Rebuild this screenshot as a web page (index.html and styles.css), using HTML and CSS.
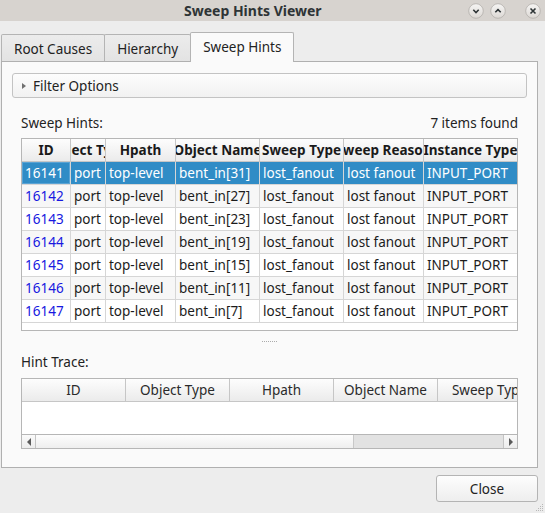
FILE: index.html
```html
<!DOCTYPE html>
<html>
<head>
<meta charset="utf-8">
<title>Sweep Hints Viewer</title>
<link rel="stylesheet" href="styles.css">
</head>
<body>
<div class="window">
  <header class="titlebar">
    <span class="title">Sweep Hints Viewer</span>
    <div class="wm">
      <svg class="wm-btn" viewBox="0 0 16 16"><defs><linearGradient id="g" x1="0" y1="0" x2="0" y2="1"><stop offset="0" stop-color="#f6f5f4"/><stop offset="1" stop-color="#dcd8d4"/></linearGradient></defs><circle cx="8" cy="8" r="7.3" fill="url(#g)" stroke="#b3afab" stroke-width="0.8"/><path d="M5.3 6.8 L8 9.5 L10.7 6.8" fill="none" stroke="#2e3436" stroke-width="1.6"/></svg>
      <svg class="wm-btn" viewBox="0 0 16 16"><circle cx="8" cy="8" r="7.3" fill="url(#g)" stroke="#b3afab" stroke-width="0.8"/><path d="M5.3 9.3 L8 6.6 L10.7 9.3" fill="none" stroke="#2e3436" stroke-width="1.6"/></svg>
      <svg class="wm-btn close" viewBox="0 0 16 16"><circle cx="8" cy="8" r="7.3" fill="url(#g)" stroke="#b3afab" stroke-width="0.8"/><path d="M5.5 5.5 L10.5 10.5 M10.5 5.5 L5.5 10.5" fill="none" stroke="#2e3436" stroke-width="1.6"/></svg>
    </div>
  </header>
  <main class="content">
    <nav class="tabs">
      <div class="tab">Root Causes</div>
      <div class="tab">Hierarchy</div>
      <div class="tab active">Sweep Hints</div>
    </nav>
    <section class="panel">
      <div class="filter"><span class="arrow"></span>Filter Options</div>
      <div class="group">
        <div class="caption"><span>Sweep Hints:</span><span>7 items found</span></div>
        <div class="table main">
          <div class="row head">
            <div><span>ID</span></div>
            <div><span>Object Type</span></div>
            <div><span>Hpath</span></div>
            <div><span>Object Name</span></div>
            <div><span>Sweep Type</span></div>
            <div><span>Sweep Reason</span></div>
            <div><span>Instance Type</span></div>
          </div>
          <div class="row sel">
            <div class="id focus">16141</div><div>port</div><div>top-level</div><div>bent_in[31]</div><div>lost_fanout</div><div>lost fanout</div><div>INPUT_PORT</div>
          </div>
          <div class="row alt">
            <div class="id">16142</div><div>port</div><div>top-level</div><div>bent_in[27]</div><div>lost_fanout</div><div>lost fanout</div><div>INPUT_PORT</div>
          </div>
          <div class="row">
            <div class="id">16143</div><div>port</div><div>top-level</div><div>bent_in[23]</div><div>lost_fanout</div><div>lost fanout</div><div>INPUT_PORT</div>
          </div>
          <div class="row alt">
            <div class="id">16144</div><div>port</div><div>top-level</div><div>bent_in[19]</div><div>lost_fanout</div><div>lost fanout</div><div>INPUT_PORT</div>
          </div>
          <div class="row">
            <div class="id">16145</div><div>port</div><div>top-level</div><div>bent_in[15]</div><div>lost_fanout</div><div>lost fanout</div><div>INPUT_PORT</div>
          </div>
          <div class="row alt">
            <div class="id">16146</div><div>port</div><div>top-level</div><div>bent_in[11]</div><div>lost_fanout</div><div>lost fanout</div><div>INPUT_PORT</div>
          </div>
          <div class="row">
            <div class="id">16147</div><div>port</div><div>top-level</div><div>bent_in[7]</div><div>lost_fanout</div><div>lost fanout</div><div>INPUT_PORT</div>
          </div>
        </div>
        <div class="splitter"><span class="dots"></span></div>
        <div class="caption trace-caption"><span>Hint Trace:</span></div>
        <div class="table trace">
          <div class="row head">
            <div><span>ID</span></div>
            <div><span>Object Type</span></div>
            <div><span>Hpath</span></div>
            <div><span>Object Name</span></div>
            <div><span>Sweep Type</span></div>
          </div>
          <div class="trace-body"></div>
          <div class="hscroll">
            <div class="sb-btn left"><span class="tri-left"></span></div>
            <div class="sb-thumb"></div>
            <div class="sb-track"></div>
            <div class="sb-btn right"><span class="tri-right"></span></div>
          </div>
        </div>
      </div>
    </section>
    <footer class="buttons"><button class="btn">Close</button></footer>
  </main>
  <svg class="grip" viewBox="0 0 8 8"><g fill="#b8b8b8"><rect x="6" y="0" width="1" height="1"/><rect x="4" y="2" width="1" height="1"/><rect x="6" y="2" width="1" height="1"/><rect x="2" y="4" width="1" height="1"/><rect x="4" y="4" width="1" height="1"/><rect x="6" y="4" width="1" height="1"/><rect x="0" y="6" width="1" height="1"/><rect x="2" y="6" width="1" height="1"/><rect x="4" y="6" width="1" height="1"/><rect x="6" y="6" width="1" height="1"/></g></svg>
</div>
</body>
</html>
```

FILE: styles.css
```css
* { box-sizing: border-box; }
html, body { margin: 0; padding: 0; }
body {
  width: 545px;
  height: 513px;
  overflow: hidden;
  background: #ededed;
  font-family: "Noto Sans", "Open Sans", sans-serif;
  font-size: 13.5px;
  color: #1c1c1c;
}
.window { position: relative; width: 545px; height: 513px; }

.titlebar {
  display: flex;
  align-items: center;
  height: 21px;
  background: #d7d3cf;
}
.title {
  margin-left: 184px;
  font-weight: bold;
  font-size: 14px;
  line-height: 21px;
  color: #2e3436;
}
.wm { display: flex; margin-left: auto; margin-right: 4px; }
.wm-btn { width: 16px; height: 16px; display: block; }
.wm-btn + .wm-btn { margin-left: 6px; }
.wm-btn.close { margin-left: 19px; }

.content { padding: 11px 7px 0 1px; }

.tabs {
  display: flex;
  align-items: flex-end;
  height: 30px;
  margin-bottom: -1px;
  position: relative;
  z-index: 1;
}
.tab {
  height: 27px;
  margin-bottom: 1px;
  padding: 3px 12px 0;
  line-height: 23px;
  border: 1px solid #b4b4b4;
  border-bottom: none;
  border-radius: 2px 2px 0 0;
  background: linear-gradient(#ececec, #e3e3e3);
  color: #222;
  white-space: nowrap;
}
.tab + .tab { margin-left: -1px; }
.tab.active {
  height: 30px;
  margin-bottom: 0;
  padding-top: 0;
  line-height: 29px;
  background: #fafafa;
  position: relative;
}

.panel {
  border: 1px solid #b0b0b0;
  background: #fafafa;
  padding: 11px 10px 18px;
}
.filter {
  height: 25px;
  display: flex;
  align-items: center;
  padding-left: 9px;
  border: 1px solid #c3c3c3;
  border-radius: 3px;
  background: linear-gradient(#fdfdfd, #f1f1f1);
  color: #222;
}
.arrow {
  width: 0;
  height: 0;
  border-left: 4px solid #707070;
  border-top: 3.5px solid transparent;
  border-bottom: 3.5px solid transparent;
  margin-right: 7px;
}

.group { padding: 16px 9px 0; }
.caption {
  display: flex;
  justify-content: space-between;
  line-height: 18px;
  height: 18px;
  color: #222;
}
.trace-caption { margin-top: 1px; }

.table {
  border: 1px solid #b6b6b6;
  background: #fff;
  overflow: hidden;
}
.main { margin-top: 6px; height: 193px; }
.trace { margin-top: 7px; height: 71px; }

.row {
  display: grid;
  grid-template-columns: 49px 35px 70px 84px 84px 80px 93px;
  height: 23px;
}
.row > div {
  border-right: 1px solid #d6d6d6;
  border-bottom: 1px solid #d6d6d6;
  padding-left: 3px;
  line-height: 22px;
  white-space: nowrap;
  overflow: hidden;
}
.row > div:last-child { border-right: none; }
.row.alt { background: #f7f7f7; }
.row.sel { background: #308cc6; color: #fff; }
.id { color: #1818e0; }
.sel .id { color: #fff; }
.sel .focus { box-shadow: inset 0 0 0 1px #5aa3d4; }

.head > div {
  display: flex;
  justify-content: center;
  padding-left: 0;
  background: linear-gradient(#fdfdfd, #ebebeb);
  border-color: #c6c6c6;
  font-weight: bold;
  color: #1a1a1a;
}
.head span { flex-shrink: 0; }

.trace .row { grid-template-columns: repeat(5, 104px); }
.trace .head > div { font-weight: normal; color: #2a2a2a; }
.trace .head > div:last-child { border-right: 1px solid #c6c6c6; }
.trace-body { height: 32px; background: #fff; }

.splitter {
  height: 21px;
  display: flex;
  justify-content: center;
  align-items: center;
}
.dots {
  width: 16px;
  height: 1px;
  background: repeating-linear-gradient(to right, #ababab 0 1px, transparent 1px 2px);
}

.hscroll {
  display: flex;
  height: 14px;
  border-top: 1px solid #b6b6b6;
  background: #e2e2e2;
}
.sb-btn {
  width: 14px;
  display: flex;
  align-items: center;
  justify-content: center;
  background: linear-gradient(#fafafa, #ececec);
}
.sb-btn.left { border-right: 1px solid #c4c4c4; }
.sb-btn.right { border-left: 1px solid #c4c4c4; }
.tri-left {
  width: 0; height: 0;
  border-right: 4px solid #5a5a5a;
  border-top: 4px solid transparent;
  border-bottom: 4px solid transparent;
}
.tri-right {
  width: 0; height: 0;
  border-left: 4px solid #5a5a5a;
  border-top: 4px solid transparent;
  border-bottom: 4px solid transparent;
}
.sb-thumb {
  width: 318px;
  background: linear-gradient(#fdfdfd, #eeeeee);
  border-right: 1px solid #c8c8c8;
}
.sb-track { flex: 1; background: #e2e2e2; }

.buttons {
  display: flex;
  justify-content: flex-end;
  padding-top: 7px;
}
.btn {
  width: 102px;
  height: 27px;
  padding: 0;
  font: inherit;
  color: #222;
  border: 1px solid #b4b4b4;
  border-radius: 3px;
  background: linear-gradient(#fdfdfd, #eeeeee);
}

.grip {
  position: absolute;
  right: 1px;
  bottom: 1px;
  width: 8px;
  height: 8px;
}
```
